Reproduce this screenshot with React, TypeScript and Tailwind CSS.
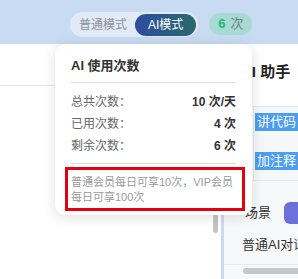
const font = "font-['Liberation_Sans','Noto_Sans_CJK_SC',sans-serif]";

/* ── 顶部栏 ───────────────────────────────── */
function Header() {
  return (
    <header className="flex h-[44px] shrink-0 items-start bg-[#c9dbf2] pl-[70px] pt-[12px]">
      <div className="flex h-[25px] items-center rounded-full bg-[#e1eaf6] pl-[9px] pr-[2px]">
        <span className="text-[12px] text-[#8b9099]">普通模式</span>
        <span className="ml-[8px] flex h-[22px] items-center rounded-full bg-gradient-to-r from-[#2f4a9f] to-[#2a6a6c] px-[13px] text-[12px] text-white">
          AI模式
        </span>
      </div>
      <div className="ml-[11px] mt-[1px] flex h-[22px] w-[43px] items-center justify-center gap-[5px] rounded-full bg-[#a7dad2] text-[13px]">
        <span className="font-bold text-[#23b87a]">6</span>
        <span className="text-[#6f7d7b]">次</span>
      </div>
    </header>
  );
}

/* ── 使用次数弹层 ───────────────────────────── */
function UsagePopover() {
  const rows = [
    { label: "总共次数：", value: "10 次/天" },
    { label: "已用次数：", value: "4 次" },
    { label: "剩余次数：", value: "6 次" },
  ];
  return (
    <div className="absolute left-[55px] top-[44px] z-10 h-[171px] w-[197px] rounded-[10px] bg-white px-[16px] pt-[14px] shadow-[0_2px_14px_rgba(0,0,0,0.13)]">
      <div className="text-[13px] font-bold leading-[16px] text-[#333]">AI 使用次数</div>
      <div className="mt-[8px] border-t border-[#dcdcdc]" />
      <div className="mt-[8px]">
        {rows.map((r) => (
          <div key={r.label} className="flex h-[22px] items-center justify-between text-[12px]">
            <span className="text-[#666]">{r.label}</span>
            <span className="font-bold text-[#333]">{r.value}</span>
          </div>
        ))}
      </div>
      <div className="mt-[6px] border-t border-[#dcdcdc]" />
      <div className="ml-[-6px] mt-[3px] w-[180px] border-[3px] border-[#e3000f] pb-[3px] pl-[3px] pt-[5px] text-[11px] leading-[15px] text-[#999]">
        普通会员每日可享10次，VIP会员
        <br />
        每日可享100次
      </div>
    </div>
  );
}

/* ── 右侧助手面板 ───────────────────────────── */
function AssistantPanel() {
  return (
    <aside className="flex w-[77px] shrink-0 flex-col border-l-[3px] border-[#c9dbf2] bg-white">
      <div className="h-[62px] shrink-0 pl-[17px] pt-[18px] text-[15px] font-bold leading-[20px] whitespace-nowrap text-[#222]">
        AI 助手
      </div>
      <div className="h-[75px] shrink-0 border-y border-[#e6e8ec] pl-[29px]">
        <div className="flex h-full flex-col border-l border-[#e6e8ec] bg-[#f6f7f9] pl-[1px] pt-[6px]">
          <div className="flex h-[18px] items-center bg-[#4b9ef3] pl-[2px] text-[13px] whitespace-nowrap text-white">讲代码</div>
          <div className="mt-[21px] flex h-[18px] items-center bg-[#4b9ef3] pl-[2px] text-[13px] whitespace-nowrap text-white">加注释</div>
        </div>
      </div>
      <div className="flex flex-1 flex-col bg-[#f7f8fa]">
        <div className="mt-[21px] flex h-[22px] items-center pl-[21px]">
          <span className="text-[13px] whitespace-nowrap text-[#333]">场景</span>
          <span className="ml-[13px] h-[22px] w-[20px] rounded-l-[6px] bg-[#6a70dc]" />
        </div>
        <div className="mt-[11px] pl-[18px] text-[13px] leading-[20px] whitespace-nowrap text-[#333]">普通AI对话</div>
        <div className="mt-[9px] border-t border-[#e8e9ec]" />
        <div className="ml-[19px] mt-[3px] h-[6px] rounded-l-full bg-[#c6c7ca]" />
      </div>
    </aside>
  );
}

export default function App() {
  return (
    <div className={`relative flex h-[279px] w-[298px] flex-col overflow-hidden bg-white ${font}`}>
      <Header />
      <div className="flex flex-1 overflow-hidden">
        {/* 左侧主区 */}
        <main className="flex flex-1">
          <div className="flex-1">
            <div className="h-[42px] border-b border-[#e8e8e8]" />
          </div>
          <div className="w-[9px] pl-[1px] pt-[170px]">
            <div className="h-[19px] w-[5px] rounded-full bg-[#c4c4c4]" />
          </div>
        </main>
        <AssistantPanel />
      </div>
      <UsagePopover />
    </div>
  );
}
